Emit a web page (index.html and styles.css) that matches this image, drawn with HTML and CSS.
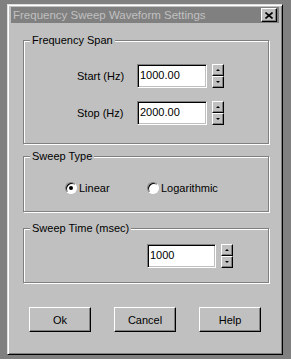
FILE: index.html
```html
<!DOCTYPE html>
<html lang="en">
<head>
    <meta charset="UTF-8">
    <meta name="viewport" content="width=device-width, initial-scale=1.0">
    <title>Frequency Sweep Waveform Settings</title>
    <link rel="stylesheet" href="styles.css">
</head>
<body>
    <div class="window">
        <div class="titlebar">
            <span class="title">Frequency Sweep Waveform Settings</span>
            <span class="close">
                <svg width="8" height="7" viewBox="0 0 8 7">
                    <path d="M0.5 0.5 L7.5 6.5 M7.5 0.5 L0.5 6.5" stroke="#000" stroke-width="1.6" fill="none"/>
                </svg>
            </span>
        </div>

        <div class="client">
            <fieldset class="group">
                <legend>Frequency Span</legend>
                <div class="span-body">
                    <div class="row">
                        <label for="start">Start (Hz)</label>
                        <input class="field" type="text" id="start" value="1000.00">
                        <div class="spin"><span class="up"></span><span class="down"></span></div>
                    </div>
                    <div class="row">
                        <label for="stop">Stop (Hz)</label>
                        <input class="field" type="text" id="stop" value="2000.00">
                        <div class="spin"><span class="up"></span><span class="down"></span></div>
                    </div>
                </div>
            </fieldset>

            <fieldset class="group type">
                <legend>Sweep Type</legend>
                <div class="type-body">
                    <label class="radio first"><span class="dot checked"></span>Linear</label>
                    <label class="radio"><span class="dot"></span>Logarithmic</label>
                </div>
            </fieldset>

            <fieldset class="group time">
                <legend>Sweep Time (msec)</legend>
                <div class="time-body">
                    <div class="row">
                        <input class="field short" type="text" id="time" value="1000">
                        <div class="spin"><span class="up"></span><span class="down"></span></div>
                    </div>
                </div>
            </fieldset>

            <div class="buttons">
                <button type="button">Ok</button>
                <button type="button">Cancel</button>
                <button type="button">Help</button>
            </div>
        </div>
    </div>
</body>
</html>
```

FILE: styles.css
```css
body {
    margin: 0;
    background-color: #808080;
    font-family: "Liberation Sans", Arial, sans-serif;
    font-size: 11px;
    color: #000;
}

.window {
    box-sizing: border-box;
    width: 276px;
    height: 351px;
    margin: 4px 0 0 7px;
    padding: 2px 3px;
    background-color: #c0c0c0;
    border: 1px solid;
    border-color: #dfdfdf #000 #000 #dfdfdf;
    box-shadow: inset 1px 1px #fff, inset -1px -1px #808080;
}

.titlebar {
    height: 16px;
    padding: 0 2px 0 2px;
    background-color: #808080;
    display: flex;
    align-items: center;
    justify-content: space-between;
}

.title {
    color: #c0c0c0;
    font-size: 11.5px;
}

.close {
    box-sizing: border-box;
    width: 16px;
    height: 14px;
    background-color: #c0c0c0;
    border: 1px solid;
    border-color: #fff #000 #000 #fff;
    box-shadow: inset -1px -1px #808080;
    display: flex;
    align-items: center;
    justify-content: center;
}

.client {
    padding-top: 11px;
}

.group {
    box-sizing: border-box;
    width: 246px;
    min-width: 0;
    margin: 0 0 0 12px;
    padding: 0;
    border: 1px solid #808080;
    box-shadow: inset 1px 1px #fff, 1px 1px #fff;
}

.group legend {
    margin-left: 6px;
    padding: 0 2px;
    line-height: 13px;
    background-color: #c0c0c0;
}

.type {
    margin-top: 6px;
}

.time {
    margin-top: 10px;
}

.span-body {
    padding: 17px 0 18px 53px;
    display: flex;
    flex-direction: column;
    gap: 13px;
}

.row {
    display: flex;
    align-items: center;
    height: 24px;
}

.row label {
    width: 60px;
}

.field {
    box-sizing: border-box;
    width: 70px;
    height: 24px;
    margin: 0;
    padding: 0 0 3px 2px;
    font-family: "Liberation Sans", Arial, sans-serif;
    font-size: 11px;
    color: #000;
    background-color: #fff;
    border: 1px solid;
    border-color: #808080 #fff #fff #808080;
    box-shadow: inset 1px 1px #000, inset -1px -1px #c0c0c0;
    outline: none;
}

.field.short {
    width: 69px;
}

.spin {
    margin-left: 5px;
    width: 12px;
    display: flex;
    flex-direction: column;
}

.spin span {
    box-sizing: border-box;
    height: 12px;
    background-color: #c0c0c0;
    border: 1px solid;
    border-color: #fff #000 #000 #fff;
    box-shadow: inset -1px -1px #808080;
    display: flex;
    align-items: center;
    justify-content: center;
}

.spin .up::after,
.spin .down::after {
    content: "";
    width: 0;
    height: 0;
    border-left: 2px solid transparent;
    border-right: 2px solid transparent;
}

.spin .up::after {
    border-bottom: 2px solid #000;
}

.spin .down::after {
    border-top: 2px solid #000;
}

.type-body {
    padding: 18px 0 16px 41px;
    display: flex;
    height: 14px;
    align-items: center;
}

.radio {
    display: flex;
    align-items: center;
    gap: 2px;
}

.radio.first {
    width: 82px;
}

.dot {
    box-sizing: border-box;
    width: 12px;
    height: 12px;
    border-radius: 50%;
    background-color: #fff;
    border: 1px solid;
    border-color: #808080 #fff #fff #808080;
    box-shadow: inset 1px 1px #000;
    display: flex;
    align-items: center;
    justify-content: center;
}

.dot.checked::after {
    content: "";
    width: 4px;
    height: 4px;
    border-radius: 50%;
    background-color: #000;
}

.time-body {
    padding: 9px 0 14px 123px;
}

.buttons {
    margin-top: 24px;
    padding-left: 18px;
    display: flex;
    gap: 23px;
}

.buttons button {
    box-sizing: border-box;
    width: 62px;
    height: 25px;
    padding: 0;
    font-family: "Liberation Sans", Arial, sans-serif;
    font-size: 11px;
    color: #000;
    background-color: #c0c0c0;
    border: 1px solid;
    border-color: #fff #000 #000 #fff;
    box-shadow: inset -1px -1px #808080;
}
```
